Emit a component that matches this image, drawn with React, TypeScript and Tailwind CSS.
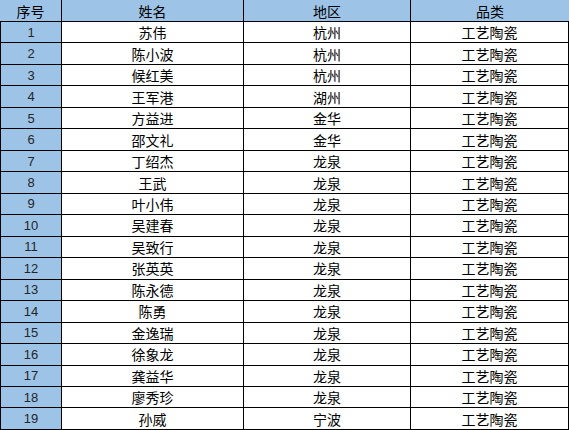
import React from 'react';

const rows = [
  ['1', '苏伟', '杭州'],
  ['2', '陈小波', '杭州'],
  ['3', '候红美', '杭州'],
  ['4', '王军港', '湖州'],
  ['5', '方益进', '金华'],
  ['6', '邵文礼', '金华'],
  ['7', '丁绍杰', '龙泉'],
  ['8', '王武', '龙泉'],
  ['9', '叶小伟', '龙泉'],
  ['10', '吴建春', '龙泉'],
  ['11', '吴致行', '龙泉'],
  ['12', '张英英', '龙泉'],
  ['13', '陈永德', '龙泉'],
  ['14', '陈勇', '龙泉'],
  ['15', '金逸瑞', '龙泉'],
  ['16', '徐象龙', '龙泉'],
  ['17', '龚益华', '龙泉'],
  ['18', '廖秀珍', '龙泉'],
  ['19', '孙威', '宁波'],
];

const cols = 'grid grid-cols-[62px_182px_167px_158px]';
const cjk = "font-['Noto_Sans_CJK_SC','Noto_Sans',sans-serif]";

const App = () => {
  return (
    <div className={`w-[569px] h-[430px] overflow-hidden bg-white text-[14px] leading-none text-black ${cjk}`}>
      {/* Header */}
      <div className={`${cols} h-[22px] bg-[#9dc3e6]`}>
        <div className="flex items-center justify-center border-r border-b border-black">序号</div>
        <div className="flex items-center justify-center border-r border-b border-black">姓名</div>
        <div className="flex items-center justify-center border-r border-b border-black">地区</div>
        <div className="flex items-center justify-center border-b border-black">品类</div>
      </div>

      {rows.map(([no, name, area]) => (
        <div key={no} className={`${cols} h-[21.47px]`}>
          <div className="flex items-center justify-center border-l border-r border-b border-black bg-[#9dc3e6] font-['Liberation_Sans',sans-serif] text-[13px] text-[#262626]">
            {no}
          </div>
          <div className="flex items-center justify-center border-r border-b border-black">{name}</div>
          <div className="flex items-center justify-center border-r border-b border-black">{area}</div>
          <div className="flex items-center justify-center border-r border-b border-black">工艺陶瓷</div>
        </div>
      ))}
    </div>
  );
};

export default App;
